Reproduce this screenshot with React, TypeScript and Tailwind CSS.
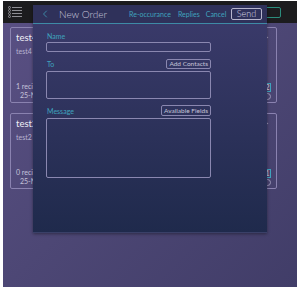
import { ChevronLeft, ChevronRight } from 'lucide-react'

const cards = [
  { title: 'test4', sub: 'test4', recip: '1 recipient', date: '25-Nov-2014', badge: '2' },
  { title: 'test2', sub: 'test2', recip: '0 recipients', date: '25-Nov-2014', badge: '1' },
]

function ListIcon() {
  return (
    <svg width="14" height="12" viewBox="0 0 14 12" fill="none" stroke="#8e8e94" strokeWidth="1">
      <circle cx="1.5" cy="1.5" r="1" />
      <circle cx="1.5" cy="4.5" r="1" />
      <circle cx="1.5" cy="7.5" r="1" />
      <circle cx="1.5" cy="10.5" r="1" />
      <path d="M4 1.5h10M4 4.5h10M4 7.5h10M4 10.5h10" />
    </svg>
  )
}

export default function App() {
  return (
    <div className="relative w-[300px] h-[287px] overflow-hidden bg-white pt-px px-[3px]" style={{ fontFamily: 'Lato, "Liberation Sans", sans-serif' }}>
      <div className="h-full flex flex-col bg-gradient-to-br from-[#5a5084] via-[#4d4775] to-[#413d68]">
        {/* Top bar */}
        <div className="h-[22px] shrink-0 bg-[#1c1c1e] flex items-center justify-between pl-[5px] pr-[16px]">
          <ListIcon />
          <div className="w-[100px] h-[11px] border border-[#2b8c7c] rounded-[2px]" />
        </div>

        {/* Cards behind */}
        <div className="flex flex-col gap-[10px] pt-[4px] pl-[7px] w-[274px]">
          {cards.map((c) => (
            <div key={c.title} className="h-[76px] border border-[#8a82b0] rounded-[2px] flex justify-between px-[5px] pt-[4px] pb-[2px]">
              <div className="flex flex-col whitespace-nowrap">
                <span className="text-[9.5px] leading-[12px] text-[#f0eff6]">{c.title}</span>
                <span className="text-[7px] leading-[10px] text-[#b8b3d0] mt-[2px]">{c.sub}</span>
                <span className="text-[7px] leading-[9px] text-[#c6c2da] mt-auto">{c.recip}</span>
                <span className="text-[7px] leading-[9px] text-[#c6c2da] pl-[4px]">{c.date}</span>
              </div>
              <div className="flex flex-col items-end">
                <ChevronRight size={9} color="#c9c5dd" className="mt-[1px]" />
                <span className="mt-auto mb-[1px] w-[7px] h-[9px] border border-[#3fa3bd] text-[7px] leading-[7px] text-[#d6d3e6] flex items-center justify-center">{c.badge}</span>
                <span className="w-[7px] h-[7px] rounded-full border border-[#9b96b8]" />
              </div>
            </div>
          ))}
        </div>
      </div>

      {/* Modal */}
      <div className="absolute left-[33px] top-[5px] w-[234px] h-[228px] flex flex-col bg-gradient-to-b from-[#3c3b6c] to-[#1f2a4c] shadow-[0_1px_3px_rgba(0,0,0,0.4)] border-b border-[#3a4068]">
        <div className="h-[19px] shrink-0 flex items-center pl-[6px] pr-[5px] bg-[#2f315a] border-b border-[#3e8aa6] whitespace-nowrap">
          <ChevronLeft size={12} color="#3fa3bd" strokeWidth={1.5} className="shrink-0" />
          <span className="ml-[8px] text-[10px] leading-[12px] font-light text-[#c4c3d8]">New Order</span>
          <span className="ml-[22px] text-[7px] text-[#3fa3bd]">Re-occurance</span>
          <span className="ml-[7px] text-[7px] text-[#3fa3bd]">Replies</span>
          <span className="ml-[6px] text-[7px] text-[#3fa3bd]">Cancel</span>
          <span className="ml-auto shrink-0 w-[31px] h-[12px] border border-[#b7b5cc] rounded-[2px] flex items-center justify-center text-[9px] leading-[10px] font-light text-[#d6d5e3]">Send</span>
        </div>

        <div className="flex flex-col pl-[13px] w-[178px]">
          <span className="mt-[8px] pl-px text-[7px] leading-[9px] text-[#3fa3bd]">Name</span>
          <div className="mt-[1px] h-[10px] border border-[#8a87b0] rounded-[2px]" />

          <div className="mt-[7px] flex items-end justify-between">
            <span className="pl-px text-[7px] leading-[9px] text-[#3fa3bd]">To</span>
            <span className="h-[10px] px-[2px] border border-[#8a87b0] rounded-[2px] text-[6.5px] leading-[8px] text-[#c4c3d8]">Add Contacts</span>
          </div>
          <div className="mt-[2px] h-[28px] border border-[#8a87b0] rounded-[2px]" />

          <div className="mt-[6px] flex items-end justify-between">
            <span className="pl-px text-[7px] leading-[9px] text-[#3fa3bd]">Message</span>
            <span className="h-[11px] px-[2px] border border-[#8a87b0] rounded-[2px] text-[6.5px] leading-[9px] text-[#c4c3d8]">Available Fields</span>
          </div>
          <div className="mt-[2px] h-[60px] border border-[#8a87b0] rounded-[2px]" />
        </div>
      </div>
    </div>
  )
}
